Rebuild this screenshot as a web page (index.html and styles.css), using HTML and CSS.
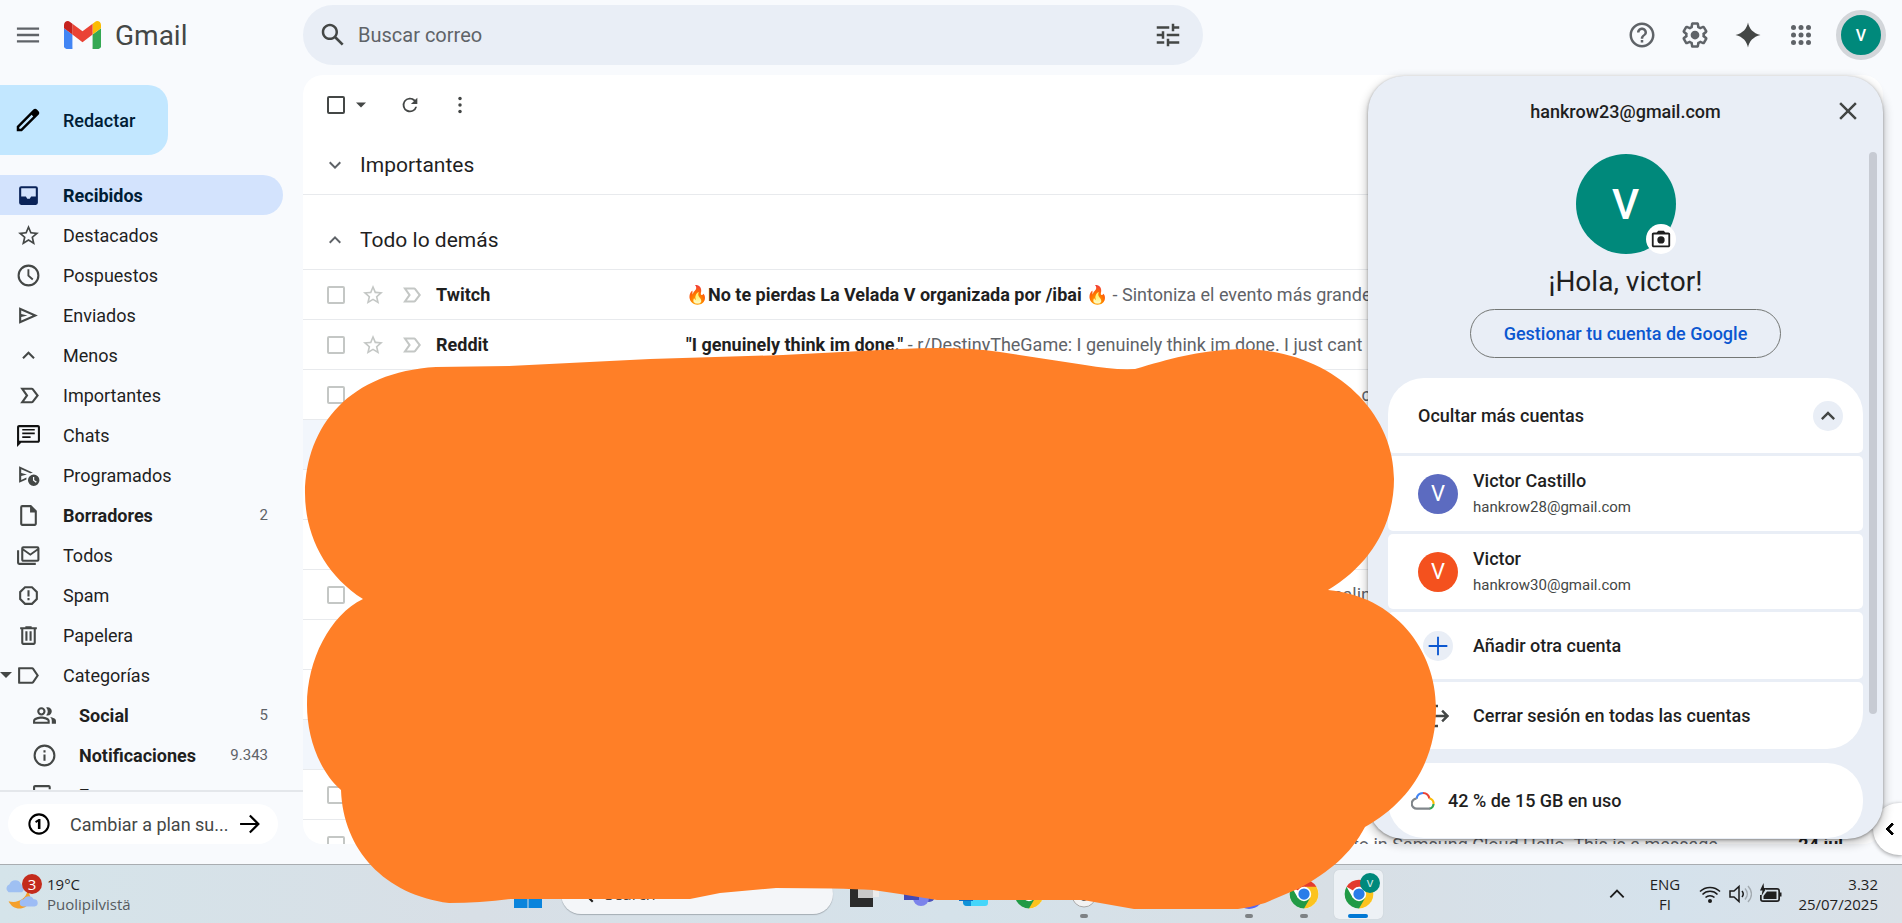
FILE: index.html
```html
<!DOCTYPE html>
<html lang="es">
<head>
<meta charset="utf-8">
<title>Gmail</title>
<link rel="stylesheet" href="styles.css">
</head>
<body>
<svg class="defs" aria-hidden="true">
  <symbol id="star" viewBox="0 0 24 24"><path d="M22 9.24l-7.19-.62L12 2 9.19 8.63 2 9.24l5.46 4.73L5.82 21 12 17.27 18.18 21l-1.63-7.03L22 9.24zM12 15.4l-3.76 2.27 1-4.28-3.32-2.88 4.38-.38L12 6.1l1.71 4.04 4.38.38-3.32 2.88 1 4.28L12 15.4z"/></symbol>
  <symbol id="important" viewBox="0 0 24 24"><path d="M4 4.5h11.2c.6 0 1.200.3 1.600.8L22 12l-5.200 6.700c-.4.500-1 .8-1.600.8H4L9.300 12zM7.900 6.500 11.800 12l-3.900 5.500h7.300L19.400 12l-4.200-5.500z"/></symbol>
  <symbol id="up" viewBox="0 0 24 24"><path d="M12 8l-6 6 1.410 1.410L12 10.830l4.590 4.580L18 14z"/></symbol>
  <symbol id="down" viewBox="0 0 24 24"><path d="M16.590 8.590L12 13.170 7.410 8.590 6 10l6 6 6-6z"/></symbol>
  <symbol id="caret" viewBox="0 0 24 24"><path d="M6 9l6 6 6-6z"/></symbol>
  <symbol id="chrome" viewBox="0 0 48 48">
    <circle cx="24" cy="24" r="23" fill="#fff"/>
    <path d="M24 24 4.100 12.500A23 23 0 0 1 43.900 12.500z" fill="#e33b2e"/>
    <path d="M24 24V12.500h19.900A23 23 0 0 1 24 47z" fill="#fcc31e"/>
    <path d="M24 24l10 5.800L24 47A23 23 0 0 1 4.100 12.500L14 29.800z" fill="#219a46"/>
    <circle cx="24" cy="24" r="11.500" fill="#fff"/><circle cx="24" cy="24" r="9" fill="#2a7de9"/>
  </symbol>
</svg>

<div class="app">
  <header class="header">
    <div class="brand">
      <button class="icon-btn" aria-label="Menú principal"><svg class="i28" viewBox="0 0 24 24"><path d="M2.500 18.500h19v-2h-19v2zm0-5.500h19v-2h-19v2zm0-7.500v2h19v-2h-19z"/></svg></button>
      <svg class="logo" viewBox="52 42 88 66">
        <path fill="#4285f4" d="M58 108h14V74L52 59v43c0 3.320 2.690 6 6 6"/>
        <path fill="#34a853" d="M120 108h14c3.320 0 6-2.690 6-6V59l-20 15"/>
        <path fill="#fbbc04" d="M120 48v26l20-15v-8c0-7.420-8.470-11.650-14.400-7.200"/>
        <path fill="#ea4335" d="M72 74V48l24 18 24-18v26L96 92"/>
        <path fill="#c5221f" d="M52 51v8l20 15V48l-5.600-4.200c-5.940-4.450-14.400-.22-14.400 7.200"/>
      </svg>
      <span class="brand-name">Gmail</span>
    </div>
    <form class="search">
      <button type="button" class="icon-btn dark" aria-label="Buscar"><svg class="i30" viewBox="0 0 24 24"><path d="M20.490 19l-5.730-5.730C15.530 12.200 16 10.910 16 9.500 16 5.910 13.090 3 9.500 3S3 5.910 3 9.500 5.910 16 9.500 16c1.410 0 2.700-.47 3.770-1.240L19 20.490 20.490 19zM5 9.500C5 7.010 7.010 5 9.500 5S14 7.010 14 9.500 11.990 14 9.500 14 5 11.990 5 9.500z"/></svg></button>
      <input type="text" placeholder="Buscar correo" aria-label="Buscar correo">
      <button type="button" class="icon-btn dark" aria-label="Opciones de búsqueda"><svg class="i30" viewBox="0 0 24 24"><path d="M3 17v2h6v-2H3zM3 5v2h10V5H3zm10 16v-2h8v-2h-8v-2h-2v6h2zM7 9v2H3v2h4v2h2V9H7zm14 4v-2H11v2h10zm-6-4h2V7h4V5h-4V3h-2v6z"/></svg></button>
    </form>
    <div class="tools">
      <button class="icon-btn" aria-label="Ayuda"><svg class="i30" viewBox="0 0 24 24"><path d="M11 18h2v-2h-2v2zm1-16C6.480 2 2 6.480 2 12s4.480 10 10 10 10-4.480 10-10S17.520 2 12 2zm0 18c-4.410 0-8-3.590-8-8s3.590-8 8-8 8 3.590 8 8-3.590 8-8 8zm0-14c-2.210 0-4 1.790-4 4h2c0-1.100.9-2 2-2s2 .9 2 2c0 2-3 1.750-3 5h2c0-2.250 3-2.500 3-5 0-2.210-1.790-4-4-4z"/></svg></button>
      <button class="icon-btn" aria-label="Configuración"><svg class="i30" viewBox="0 0 24 24"><path d="M13.850 22.250h-3.700c-.74 0-1.360-.54-1.450-1.270l-.27-1.890c-.27-.14-.53-.29-.79-.46l-1.800.72c-.7.260-1.470-.03-1.810-.65L2.200 15.530c-.35-.66-.2-1.440.36-1.880l1.530-1.190c-.01-.15-.02-.3-.02-.46 0-.15.010-.31.020-.46l-1.520-1.190c-.59-.45-.74-1.260-.37-1.880l1.850-3.190c.34-.62 1.110-.9 1.790-.63l1.810.73c.26-.17.520-.32.780-.46l.27-1.910c.09-.7.710-1.250 1.440-1.250h3.700c.74 0 1.360.54 1.450 1.270l.27 1.890c.27.140.53.290.79.460l1.800-.72c.71-.26 1.480.03 1.820.65l1.840 3.180c.36.660.2 1.440-.36 1.880l-1.520 1.190c.1.150.2.300.2.460s-.1.310-.2.460l1.520 1.190c.56.450.72 1.230.37 1.860l-1.860 3.220c-.34.620-1.110.9-1.800.63l-1.800-.72c-.26.170-.52.320-.78.460l-.27 1.910c-.1.680-.72 1.220-1.460 1.220zm-3.230-2h2.760l.37-2.550.53-.22c.44-.18.880-.44 1.340-.78l.45-.34 2.380.96 1.380-2.400-2.030-1.580.07-.56c.03-.26.060-.51.060-.78s-.03-.53-.06-.78l-.07-.56 2.030-1.580-1.390-2.400-2.390.96-.45-.35c-.42-.32-.87-.58-1.330-.77l-.52-.22-.37-2.550h-2.760l-.37 2.550-.53.210c-.44.190-.88.440-1.340.79l-.45.330-2.380-.95-1.390 2.390 2.030 1.580-.07.560a7 7 0 0 0-.06.790c0 .26.020.53.060.78l.07.560-2.030 1.580 1.380 2.400 2.390-.96.450.35c.43.330.86.580 1.330.77l.53.220.38 2.550z"/><circle cx="12" cy="12" r="3.500"/></svg></button>
      <button class="icon-btn dark" aria-label="Gemini"><svg class="i30" viewBox="0 0 24 24"><path d="M12 2c1 5 4 8.500 10 10-6 1.500-9 5-10 10-1-5-4-8.500-10-10 6-1.500 9-5 10-10z"/></svg></button>
      <button class="icon-btn" aria-label="Aplicaciones de Google"><svg class="i30" viewBox="0 0 24 24"><circle cx="6" cy="6" r="2"/><circle cx="12" cy="6" r="2"/><circle cx="18" cy="6" r="2"/><circle cx="6" cy="12" r="2"/><circle cx="12" cy="12" r="2"/><circle cx="18" cy="12" r="2"/><circle cx="6" cy="18" r="2"/><circle cx="12" cy="18" r="2"/><circle cx="18" cy="18" r="2"/></svg></button>
      <button class="me" aria-label="Cuenta de Google">V</button>
    </div>
  </header>

  <div class="body">
    <aside class="sidebar">
      <button class="compose"><svg class="i30" viewBox="0 0 24 24"><path d="M20.400 4.900 19.100 3.600c-.8-.8-2-.8-2.800 0L3 16.900V21h4.100L20.400 7.700c.8-.8.800-2 0-2.800zM6.300 19H5v-1.300l9.900-9.900 1.300 1.300z"/></svg>Redactar</button>
      <nav class="nav">
        <a href="#" class="item active bold"><svg viewBox="0 0 24 24"><path d="M5 3h14a2 2 0 0 1 2 2v14a2 2 0 0 1-2 2H5a2 2 0 0 1-2-2V5a2 2 0 0 1 2-2zm0 2v8h4.500l1.300 2h2.400l1.300-2H19V5z"/></svg><span>Recibidos</span></a>
        <a href="#" class="item"><svg><use href="#star"/></svg><span>Destacados</span></a>
        <a href="#" class="item"><svg viewBox="0 0 24 24"><path d="M12 1.500a10.500 10.500 0 1 0 0 21 10.500 10.500 0 0 0 0-21zm0 19a8.500 8.500 0 1 1 0-17 8.500 8.500 0 0 1 0 17zM12.800 6H11v6.500l4.500 4 1.200-1.300-3.900-3.500z"/></svg><span>Pospuestos</span></a>
        <a href="#" class="item"><svg viewBox="0 0 24 24"><path d="M3 4v16l18-8L3 4zm2 3.100L16 12 5 16.900V13.500L11 12 5 10.500z"/></svg><span>Enviados</span></a>
        <a href="#" class="item"><svg><use href="#up"/></svg><span>Menos</span></a>
        <a href="#" class="item"><svg><use href="#important"/></svg><span>Importantes</span></a>
        <a href="#" class="item"><svg class="black" viewBox="0 0 24 24"><path d="M3 2C1.900 2 1 2.900 1 4v19l4-4h16c1.100 0 2-.9 2-2V4c0-1.100-.9-2-2-2zm0 2h18v13H3zm3 1.700v1.600h12V5.700zm0 3.500v1.600h12V9.200zm0 3.500v1.600h8v-1.600z"/></svg><span>Chats</span></a>
        <a href="#" class="item"><svg viewBox="0 0 24 24"><path d="M3 3v16l7-3.100V14l-5 2.200v-3.700L10.500 11 5 9.500V5.900l8.700 4 2.600-.6z"/><path d="M17 11a5.500 5.500 0 1 0 0 11 5.500 5.500 0 0 0 0-11zm2 8-2.700-2.300V13.500h1.200v2.700L20 18z"/></svg><span>Programados</span></a>
        <a href="#" class="item bold"><svg viewBox="0 0 24 24"><path d="M14.500 2H6a2 2 0 0 0-2 2v16c0 1.100.9 2 2 2h12c1.100 0 2-.9 2-2V7.500zM18 20H6V4h7.500v5H18z"/></svg><span>Borradores</span><span class="count">2</span></a>
        <a href="#" class="item"><svg viewBox="0 0 24 24"><path d="M20.500 3H7a2 2 0 0 0-2 2v11c0 1.100.9 2 2 2h13.500a2 2 0 0 0 2-2V5a2 2 0 0 0-2-2zm0 13H7V7.500l6.750 4.700 6.750-4.700zm-6.750-6L7 5.200V5h13.500v.2zM1 7v12a2 2 0 0 0 2 2h16v-2H3V7z"/></svg><span>Todos</span></a>
        <a href="#" class="item"><svg viewBox="0 0 24 24"><path d="M15.730 3H8.270L3 8.270v7.460L8.270 21h7.460L21 15.730V8.270zM19 14.900 14.900 19H9.100L5 14.900V9.100L9.100 5h5.800L19 9.100zM11 7h2v6h-2zm0 7.500h2v2h-2z"/></svg><span>Spam</span></a>
        <a href="#" class="item"><svg viewBox="0 0 24 24"><path d="M15 4V3H9v1H4v2h1v13c0 1.100.9 2 2 2h10c1.100 0 2-.9 2-2V6h1V4zm2 15H7V6h10zM9 8h2v9H9zm4 0h2v9h-2z"/></svg><span>Papelera</span></a>
        <a href="#" class="item"><svg class="fold"><use href="#caret"/></svg><svg viewBox="0 0 24 24"><path d="M2 5c0-.6.4-1 1-1h12.500c.6 0 1.200.3 1.600.8L22 12l-4.900 7.200c-.4.500-1 .8-1.600.8H3c-.6 0-1-.4-1-1zm2 1v12h11.500l4.100-6-4.100-6z"/></svg><span>Categorías</span></a>
        <a href="#" class="item sub bold"><svg viewBox="0 0 24 24"><path d="M9 12a4 4 0 1 0 0-8 4 4 0 0 0 0 8zm0-6a2 2 0 1 1 0 4 2 2 0 0 1 0-4zm0 7c-2.700 0-8 1.300-8 4v3h16v-3c0-2.700-5.300-4-8-4zm6 5H3v-1c0-.6 3.100-2 6-2s6 1.400 6 2zM15 12a4 4 0 0 0 0-8c-.5 0-1 .1-1.400.2a6 6 0 0 1 0 7.600c.4.100.9.200 1.400.2zm2.500 1.500A4.400 4.400 0 0 1 19 17v3h4v-3c0-1.800-2.900-3-5.500-3.500z"/></svg><span>Social</span><span class="count">5</span></a>
        <a href="#" class="item sub bold"><svg viewBox="0 0 24 24"><path d="M11 7h2v2h-2zm0 4h2v6h-2zm1-9.500a10.500 10.500 0 1 0 0 21 10.500 10.500 0 0 0 0-21zm0 19a8.500 8.500 0 1 1 0-17 8.500 8.500 0 0 1 0 17z"/></svg><span>Notificaciones</span><span class="count">9.343</span></a>
        <a href="#" class="item sub bold"><svg viewBox="0 0 24 24"><path d="M3 2C1.900 2 1 2.900 1 4v15l4-4h1v-2H3V4h13v2h2V4c0-1.100-.9-2-2-2zM8 7v10h11l4 4V9c0-1.100-.9-2-2-2z"/></svg><span>Foros</span></a>
      </nav>
      <div class="upgrade-wrap">
        <button class="upgrade"><svg class="i22" viewBox="0 0 24 24"><circle class="line" cx="12" cy="12" r="10.500" stroke="#000" stroke-width="2.200"/><path d="M10.800 17.500V9.600l-2 1.200-1.100-1.900L11.600 6.500h2v11z"/></svg><span>Cambiar a plan su...</span><svg class="i28" viewBox="0 0 24 24"><path d="M12.500 4l-1.300 1.300 5.700 5.800H3.500v1.800h13.400l-5.700 5.800L12.500 20l8-8z"/></svg></button>
      </div>
    </aside>

    <main class="mail">
      <div class="toolbar">
        <input type="checkbox" class="check strong" aria-label="Seleccionar">
        <button class="icon-btn pick" aria-label="Opciones de selección"><svg class="i20"><use href="#caret"/></svg></button>
        <button class="icon-btn" aria-label="Actualizar"><svg class="i22" viewBox="0 0 24 24"><path d="M17.650 6.350A8 8 0 1 0 19.730 14h-2.080A6 6 0 1 1 12 6c1.660 0 3.140.69 4.220 1.780L13 11h7V4z"/></svg></button>
        <button class="icon-btn" aria-label="Más"><svg class="i22" viewBox="0 0 24 24"><circle cx="12" cy="5" r="1.900"/><circle cx="12" cy="12" r="1.900"/><circle cx="12" cy="19" r="1.900"/></svg></button>
      </div>
      <h2 class="section first"><svg class="i24"><use href="#down"/></svg>Importantes</h2>
      <h2 class="section"><svg class="i24"><use href="#up"/></svg>Todo lo demás</h2>
      <ul class="rows">
        <li class="row"><input type="checkbox" class="check" aria-label="Seleccionar Twitch"><svg class="i24"><use href="#star"/></svg><svg class="i24"><use href="#important"/></svg><b class="from">Twitch</b><span class="subject"><b>🔥No te pierdas La Velada V organizada por /ibai 🔥</b> - Sintoniza el evento más grande</span></li>
        <li class="row"><input type="checkbox" class="check" aria-label="Seleccionar Reddit"><svg class="i24"><use href="#star"/></svg><svg class="i24"><use href="#important"/></svg><b class="from">Reddit</b><span class="subject"><b>"I genuinely think im done."</b> - r/DestinyTheGame: I genuinely think im done. I just cant</span></li>
        <li class="row"><input type="checkbox" class="check" aria-label="Seleccionar"><span class="tail">c</span></li>
        <li class="row read"></li>
        <li class="row"></li>
        <li class="row"></li>
        <li class="row"><input type="checkbox" class="check" aria-label="Seleccionar"><span class="tail">nalin</span></li>
        <li class="row"></li>
        <li class="row"></li>
        <li class="row read"></li>
        <li class="row"><input type="checkbox" class="check" aria-label="Seleccionar"></li>
        <li class="row"><input type="checkbox" class="check" aria-label="Seleccionar"><span class="last">to in Samsung Cloud Hello. This is a message</span><b>24 jul</b></li>
      </ul>
    </main>
  </div>

  <button class="side-toggle" aria-label="Mostrar panel lateral"><svg class="i24" viewBox="0 0 24 24"><path d="M15.400 7.400 14 6l-6 6 6 6 1.400-1.400L10.800 12z" stroke="#000" stroke-width="1"/></svg></button>

  <section class="account">
    <div class="account-head"><span>hankrow23@gmail.com</span><button class="close" aria-label="Cerrar"><svg class="i30" viewBox="0 0 24 24"><path d="M19 6.400 17.600 5 12 10.600 6.400 5 5 6.400l5.600 5.600L5 17.600 6.400 19l5.600-5.600 5.600 5.600 1.400-1.400-5.600-5.600z"/></svg></button></div>
    <div class="account-body">
      <div class="big-avatar">V<button class="camera" aria-label="Cambiar foto"><svg class="i22" viewBox="0 0 24 24"><path d="M20 5h-3.200L15 3H9L7.200 5H4c-1.100 0-2 .9-2 2v12c0 1.100.9 2 2 2h16c1.100 0 2-.9 2-2V7c0-1.100-.9-2-2-2zm0 14H4V7h16z"/><circle cx="12" cy="13" r="4"/></svg></button></div>
      <h1 class="hello">¡Hola, victor!</h1>
      <button class="manage">Gestionar tu cuenta de Google</button>
      <div class="cards">
        <button class="card toggle"><span>Ocultar más cuentas</span><span class="round"><svg class="i28"><use href="#up"/></svg></span></button>
        <button class="card"><span class="dot indigo">V</span><span class="who">Victor Castillo<small>hankrow28@gmail.com</small></span></button>
        <button class="card"><span class="dot red">V</span><span class="who">Victor<small>hankrow30@gmail.com</small></span></button>
        <button class="card short"><span class="slot"><span class="round"><svg class="i28 blue" viewBox="0 0 24 24"><path d="M20 12.800h-7.200V20h-1.600v-7.200H4v-1.600h7.200V4h1.600v7.200H20z"/></svg></span></span><span>Añadir otra cuenta</span></button>
        <button class="card short"><span class="slot"><svg class="i30" viewBox="0 0 24 24"><path d="M5 5h7V3H5c-1.100 0-2 .9-2 2v14c0 1.100.9 2 2 2h7v-2H5zM16 7l-1.400 1.400 2.600 2.600H8v2h9.200l-2.600 2.600L16 17l5-5z"/></svg></span><span>Cerrar sesión en todas las cuentas</span></button>
      </div>
      <button class="card storage"><svg class="i24 line" viewBox="0 0 24 24" stroke-width="2.200"><path d="M5.500 9.800A7 7 0 0 1 12 4" stroke="#4285f4"/><path d="M12 4a7 7 0 0 1 6.500 5.500" stroke="#ea4335"/><path d="M18.500 9.500A5 5 0 0 1 22.500 15" stroke="#fbbc04"/><path d="M22.500 15a5 5 0 0 1-4 4.600" stroke="#34a853"/><path d="M19 19.700H6A5 5 0 0 1 5.500 9.700" stroke="#80868b"/></svg><span>42 % de 15 GB en uso</span></button>
    </div>
    <div class="thumb"></div>
  </section>
</div>

<footer class="taskbar">
  <div class="weather">
    <svg viewBox="0 0 38 38"><path d="M4 27c9 3 19-2 21-11 6 6 4 17-6 19-7 1-12-2-15-8z" fill="#f5a02b"/><path d="M4 17a5 5 0 0 1 1-9 7 7 0 0 1 13 0 5 5 0 0 1 1 9z" fill="#9fc0f2"/><path d="M20 33a4 4 0 0 1 1-8 6 6 0 0 1 11 0 4 4 0 0 1 1 8z" fill="#9dbcf5"/></svg>
    <span class="badge">3</span>
    <div><div>19°C</div><div class="muted">Puolipilvistä</div></div>
  </div>
  <div class="apps">
    <button class="tile" aria-label="Inicio"><svg viewBox="0 0 30 30"><path fill="#0a84dc" d="M1 1h13.500v13.500H1zM15.500 1H29v13.500H15.500zM1 15.500h13.500V29H1zM15.500 15.500H29V29H15.500z"/></svg></button>
    <label class="task-search"><svg class="i24" viewBox="0 0 24 24"><path d="M20.490 19l-5.730-5.730A6.500 6.500 0 1 0 13.270 14.760L19 20.490zM5 9.500a4.500 4.500 0 1 1 9 0 4.500 4.500 0 0 1-9 0z"/></svg><input type="text" placeholder="Search" aria-label="Search"></label>
    <button class="tile" aria-label="Vista de tareas"><svg viewBox="0 0 30 30"><path d="M1 1h23v27H1z" fill="#2b2b2b"/><path d="M9 7h15v12H9z" fill="#c9c9c9"/><path d="M24 7h6v11h-6z" fill="#ececec"/></svg></button>
    <button class="tile" aria-label="Teams"><svg viewBox="0 0 30 30"><circle cx="25" cy="17" r="6" fill="#4b53bc"/><circle cx="17" cy="19" r="8" fill="#7b83eb"/><path d="M0 8h15v13H0z" fill="#444ab5"/></svg></button>
    <button class="tile" aria-label="Outlook"><svg viewBox="0 0 30 30"><path d="M4 4h25v20a3 3 0 0 1-3 3H8a4 4 0 0 1-4-4z" fill="#45d6fa"/><path d="M4 18h8v9H8a4 4 0 0 1-4-4z" fill="#1092d8"/><path d="M0 8h14v14H0z" fill="#0f6fc5"/></svg></button>
    <button class="tile" aria-label="Chrome"><svg><use href="#chrome"/></svg></button>
    <button class="tile running" aria-label="Aplicación"><svg viewBox="0 0 30 30"><circle cx="15" cy="16" r="12" fill="#f2f2f2" stroke="#a9a9a9"/><circle cx="15" cy="17" r="5" fill="#555"/></svg></button>
    <button class="tile" aria-label="Aplicación"></button>
    <button class="tile" aria-label="Aplicación"></button>
    <button class="tile running" aria-label="Discord"><svg viewBox="0 0 30 30"><circle cx="15" cy="15" r="15" fill="#5865f2"/></svg></button>
    <button class="tile running" aria-label="Chrome"><svg><use href="#chrome"/></svg></button>
    <button class="tile running current" aria-label="Chrome"><svg><use href="#chrome"/></svg><span class="profile">v</span></button>
  </div>
  <div class="tray">
    <svg class="i20 line" viewBox="0 0 24 24" stroke="#1b1b1b" stroke-width="2.200"><path d="M4 16l8-8 8 8"/></svg>
    <div class="lang"><div>ENG</div><div>FI</div></div>
    <div class="status">
      <svg class="i24 line" viewBox="0 0 24 24" stroke="#1b1b1b" stroke-width="1.500"><path d="M2 9.500c5.500-5.500 14.500-5.500 20 0M4.500 12.500c4-4.300 11-4.300 15 0M7.500 15.600c2.500-2.600 6.500-2.600 9 0"/><circle cx="12" cy="19" r="2" fill="#1b1b1b" stroke="none"/></svg>
      <svg class="i24 line" viewBox="0 0 24 24" stroke="#1b1b1b" stroke-width="1.500"><path d="M2 9v6h4l5 4.500v-15L6 9zM14 9c1.500 1.800 1.500 4.200 0 6"/><path d="M17 6.500c3 3.300 3 7.700 0 11M20 4c4.500 5 4.500 11 0 16" stroke="#a3abb1"/></svg>
      <svg class="i24" viewBox="0 0 24 24"><path d="M8 6h11a3 3 0 0 1 3 3v1.500h1.500v4H22V17a3 3 0 0 1-3 3H5a3 3 0 0 1-3-3v-4h1.700v4c0 .8.500 1.300 1.300 1.300h14c.8 0 1.300-.5 1.300-1.300V9c0-.8-.5-1.300-1.300-1.300H8z"/><path d="M9 9.500h9.500V17H5.500v-3z"/><path d="M5.500 1 2 8.500h2.500L3.500 14 8.500 6H6z"/></svg>
    </div>
    <div class="clock"><div>3.32</div><div>25/07/2025</div></div>
  </div>
</footer>

<svg class="blob" viewBox="0 0 1902 923" preserveAspectRatio="none" aria-hidden="true"><path fill="#ff7f27" d="M305 493C306 425 350 372 436 367L509 366 650 359 783 355 900 349Q960 346 1000 352L1085 365Q1112 370 1135 369C1170 359 1195 351 1240 349C1330 349 1394 410 1394 479C1394 525 1370 565 1328 590C1395 596 1436 650 1436 708C1436 760 1410 802 1365 827C1350 855 1330 871 1300 888L1265 903 1250 907 1238 909H1134L1100 903 1083 900H937L900 894 873 890Q840 888 776 888L720 893 690 899H510Q480 903 449 903C385 895 343 850 341 790C318 770 307 735 307 705C307 660 330 615 363 599C325 575 305 535 305 493z"/></svg>
</body>
</html>
```
FILE: styles.css
```css
* { box-sizing: border-box; }
body {
  margin: 0;
  height: 100vh;
  display: flex;
  flex-direction: column;
  overflow: hidden;
  position: relative;
  background: #f8fafd;
  color: #1f1f1f;
  font-family: Roboto, "Liberation Sans", sans-serif;
  font-size: 18px;
}
button, input { font: inherit; color: inherit; }
button { border: 0; background: none; padding: 0; }
svg { fill: currentColor; flex: none; }
.line { fill: none; }
.defs { position: absolute; width: 0; height: 0; }
.i20 { width: 20px; height: 20px; }
.i22 { width: 22px; height: 22px; overflow: visible; }
.i24 { width: 24px; height: 24px; }
.i28 { width: 28px; height: 28px; }
.i30 { width: 30px; height: 30px; }
.icon-btn { display: flex; color: #5f6368; }
.dark { color: #444746; }

.app { flex: 1; min-height: 0; display: flex; flex-direction: column; position: relative; }
.header { display: flex; align-items: center; height: 75px; padding-bottom: 5px; flex: none; }
.brand { width: 303px; display: flex; align-items: center; padding-left: 14px; }
.logo { width: 37px; height: 28px; margin-left: 22px; }
.brand-name { margin-left: 14px; font-size: 28px; color: #444746; }
.search {
  width: 900px;
  height: 60px;
  border-radius: 30px;
  background: #e9eef6;
  display: flex;
  align-items: center;
  gap: 8px;
  padding: 0 20px 0 15px;
}
.search input { flex: 1; border: 0; background: none; outline: 0; font-size: 20px; padding: 0 2px; }
.search input::placeholder { color: #5f6368; opacity: 1; }
.tools { margin-left: auto; display: flex; align-items: center; gap: 23px; padding-right: 16px; }
.me {
  width: 50px;
  height: 50px;
  margin-left: -3px;
  border-radius: 50%;
  border: 5px solid #d3d6da;
  background: #00897b;
  color: #fff;
  font-size: 16px;
  font-weight: 500;
}

.body { flex: 1; min-height: 0; display: flex; }
.sidebar { width: 303px; display: flex; flex-direction: column; padding-top: 10px; }
.compose {
  width: 188px;
  height: 70px;
  flex: none;
  margin: 0 0 20px -20px;
  padding-left: 33px;
  border-radius: 20px;
  background: #c2e7ff;
  color: #001d35;
  display: flex;
  align-items: center;
  gap: 20px;
  font-weight: 500;
}
.compose svg { color: #000; }
.nav { flex: 1; min-height: 0; overflow: hidden; }
.item {
  height: 40px;
  margin-right: 20px;
  padding: 0 15px 0 16px;
  display: flex;
  align-items: center;
  gap: 22px;
  color: #1f1f1f;
  text-decoration: none;
  border-radius: 0 20px 20px 0;
  position: relative;
}
.item svg { width: 25px; height: 25px; color: #444746; }
.item .black { color: #111; }
.item .fold { position: absolute; left: -6px; width: 24px; height: 24px; }
.item.sub { padding-left: 32px; }
.bold { font-weight: 700; }
.item.active { background: #d3e3fd; color: #001d35; }
.item.active svg { color: #0a2358; }
.count { margin-left: auto; font-size: 15px; font-weight: 400; color: #5f6368; }
.upgrade-wrap { height: 74px; flex: none; border-top: 2px solid #e4e7eb; padding: 12px 25px 0 8px; }
.upgrade {
  width: 100%;
  height: 40px;
  border-radius: 20px;
  background: #fff;
  display: flex;
  align-items: center;
  padding: 0 14px 0 20px;
  color: #000;
}
.upgrade span { flex: 1; text-align: left; margin-left: 20px; color: #444746; white-space: nowrap; }

.mail { flex: 1; min-width: 0; margin: 0 19px 20px 0; background: #fff; border-radius: 20px; overflow: hidden; }
.check {
  appearance: none;
  width: 18px;
  height: 18px;
  margin: 0;
  border: 2px solid #c4c7c5;
  border-radius: 2px;
  flex: none;
}
.strong { border-color: #444746; }
.toolbar { height: 60px; display: flex; align-items: center; gap: 28px; padding-left: 24px; }
.toolbar .pick { margin-left: -22px; }
.toolbar .icon-btn { color: #444746; }
.section {
  height: 75px;
  margin: 0;
  padding: 16px 0 0 20px;
  display: flex;
  align-items: center;
  gap: 13px;
  font-size: 21px;
  font-weight: 400;
  border-bottom: 1px solid #e8eaed;
}
.section.first { height: 60px; padding-top: 0; }
.section svg { color: #5f6368; }
.rows { list-style: none; margin: 0; padding: 0; }
.row {
  height: 50px;
  padding: 0 40px 0 24px;
  display: flex;
  align-items: center;
  border-bottom: 1px solid #e8eaed;
  white-space: nowrap;
}
.row svg { color: #c4c7c5; margin-left: 16px; }
.row svg + svg { margin-left: 14px; }
.row b { font-weight: 700; }
.row.read { background: #f2f6fc; }
.from { width: 250px; margin-left: 13px; }
.subject, .tail, .last { color: #5f6368; }
.subject b { color: #1f1f1f; }
.tail { width: 1026px; text-align: right; }
.last { flex: 1; margin-left: 1008px; }

.side-toggle {
  position: absolute;
  right: 0;
  bottom: 9px;
  width: 29px;
  height: 52px;
  border-radius: 26px 0 0 26px;
  background: #fff;
  box-shadow: 0 1px 4px rgba(0, 0, 0, 0.4);
  display: flex;
  align-items: center;
  padding-left: 5px;
}
.side-toggle svg { color: #000; }

.account {
  position: absolute;
  top: 76px;
  right: 19px;
  bottom: 25px;
  width: 515px;
  border-radius: 36px;
  background: #e9eef6;
  box-shadow: 0 4px 10px 2px rgba(0, 0, 0, 0.2), 0 1px 3px rgba(0, 0, 0, 0.35);
  overflow: hidden;
  display: flex;
  flex-direction: column;
}
.account-head { height: 70px; flex: none; display: flex; align-items: center; justify-content: center; font-weight: 500; position: relative; }
.close { position: absolute; right: 20px; display: flex; color: #444746; }
.account-body {
  flex: 1;
  min-height: 0;
  overflow: hidden;
  padding: 8px 20px 0;
  display: flex;
  flex-direction: column;
  align-items: center;
}
.big-avatar {
  width: 100px;
  height: 100px;
  flex: none;
  border-radius: 50%;
  background: #00897b;
  color: #fff;
  font-size: 42px;
  font-weight: 500;
  display: flex;
  align-items: center;
  justify-content: center;
  position: relative;
}
.camera {
  position: absolute;
  right: 0;
  bottom: 0;
  width: 30px;
  height: 30px;
  border-radius: 50%;
  background: #fff;
  color: #1f1f1f;
  display: flex;
  align-items: center;
  justify-content: center;
}
.hello { margin: 10px 0; font-size: 28px; line-height: 35px; font-weight: 400; }
.manage {
  height: 49px;
  flex: none;
  padding: 0 33px;
  border: 1px solid #747775;
  border-radius: 25px;
  color: #0b57d0;
  font-weight: 500;
}
.cards { width: 100%; margin-top: 20px; display: flex; flex-direction: column; gap: 3px; border-radius: 36px; overflow: hidden; flex: none; }
.card {
  width: 100%;
  height: 75px;
  flex: none;
  border-radius: 5px;
  background: #fff;
  display: flex;
  align-items: center;
  gap: 15px;
  padding: 0 20px 0 30px;
  text-align: left;
  font-weight: 500;
}
.card.toggle { justify-content: space-between; }
.card.short { height: 67px; }
.round {
  width: 30px;
  height: 30px;
  border-radius: 50%;
  background: #e9eef6;
  color: #444746;
  display: flex;
  align-items: center;
  justify-content: center;
}
.blue { color: #0b57d0; }
.slot { width: 40px; display: flex; justify-content: center; color: #444746; }
.dot {
  width: 40px;
  height: 40px;
  border-radius: 50%;
  color: #fff;
  font-size: 22px;
  font-weight: 400;
  display: flex;
  align-items: center;
  justify-content: center;
}
.indigo { background: #5c6bc0; }
.red { background: #f4511e; }
.who { display: flex; flex-direction: column; gap: 4px; line-height: 23px; }
.who small { font-size: 15px; font-weight: 400; color: #444746; }
.card.storage { margin-top: 14px; border-radius: 36px; padding-left: 23px; gap: 13px; }
.thumb { position: absolute; top: 76px; right: 6px; width: 8px; height: 562px; border-radius: 4px; background: #c7cbd3; }

.taskbar {
  height: 59px;
  flex: none;
  border-top: 1px solid #a9adb1;
  background: linear-gradient(90deg, #d5e4ea, #d8dfe6 25%, #d5e2ea 50%, #d8dfe5 70%, #d5e2ec 88%, #dbe1e7);
  display: grid;
  grid-template-columns: 1fr auto 1fr;
  align-items: center;
  font-family: "Open Sans", "Noto Sans", sans-serif;
  font-size: 15px;
  line-height: 20px;
}
.weather { display: flex; align-items: center; gap: 8px; padding-left: 5px; position: relative; }
.weather svg { width: 34px; height: 38px; }
.weather .badge {
  position: absolute;
  left: 22px;
  top: 0;
  width: 20px;
  height: 20px;
  border-radius: 50%;
  background: #c42b1c;
  color: #fff;
  text-align: center;
}
.muted { color: #555b60; }
.apps { display: flex; align-items: center; gap: 6px; padding-right: 16px; }
.tile { width: 49px; height: 49px; border-radius: 5px; display: flex; align-items: center; justify-content: center; position: relative; }
.tile svg { width: 30px; height: 30px; }
.task-search {
  width: 272px;
  height: 40px;
  margin-left: 3px;
  border-radius: 20px;
  background: #f4f6f9;
  box-shadow: 0 1px 1px #a5adb4;
  display: flex;
  align-items: center;
  gap: 8px;
  padding: 0 12px;
}
.task-search input { border: 0; background: none; width: 100%; padding: 0; font-size: 16px; }
.task-search input::placeholder { color: #444; opacity: 1; }
.running::after { content: ""; position: absolute; left: 21px; bottom: 1px; width: 8px; height: 4px; border-radius: 2px; background: #7e8285; }
.current { background: #edf1f5; box-shadow: 0 0 1px #b5bcc2; }
.current::after { left: 14px; width: 20px; background: #0078d4; }
.profile { position: absolute; right: 3px; top: 3px; width: 20px; height: 20px; border-radius: 50%; background: #00897b; color: #cfe8e5; font-size: 13px; line-height: 18px; }
.tray { display: flex; align-items: center; justify-content: flex-end; padding-right: 24px; }
.lang { margin-left: 21px; width: 34px; text-align: center; }
.status { display: flex; gap: 6px; margin: 0 2px 0 16px; }
.clock { text-align: right; width: 94px; }

.blob { position: absolute; left: 0; top: 0; width: 100%; height: 100%; pointer-events: none; }
```
